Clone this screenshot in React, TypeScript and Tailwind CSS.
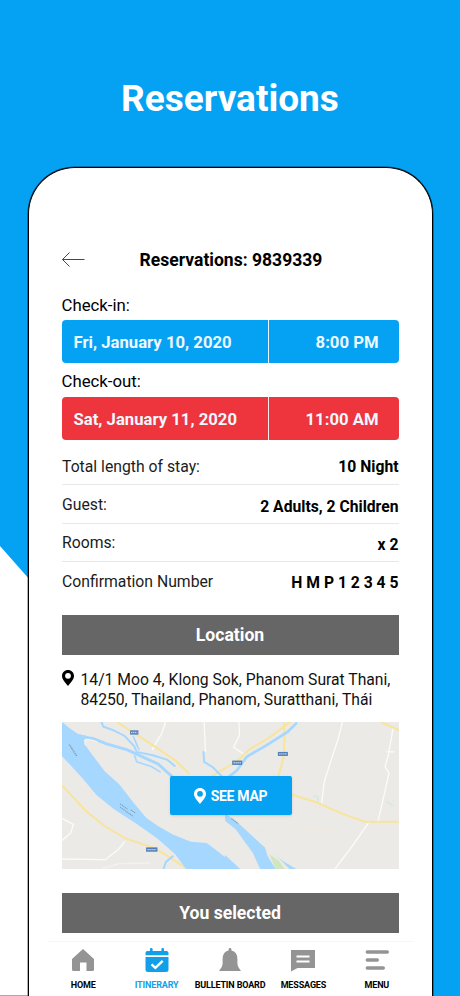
import React from 'react';

interface StayDate {
  label: string;
  date: string;
  time: string;
  barClass: string;
  labelClass: string;
}

interface Detail {
  label: string;
  value: string;
  rowClass: string;
  valueClass: string;
}

const dates: StayDate[] = [
  { label: 'Check-in:', date: 'Fri, January 10, 2020', time: '8:00 PM', barClass: 'bg-[#05a2f3]', labelClass: 'h-[30px] pt-0.5' },
  { label: 'Check-out:', date: 'Sat, January 11, 2020', time: '11:00 AM', barClass: 'bg-[#ee353d]', labelClass: 'h-[34px] pt-1' },
];

const details: Detail[] = [
  { label: 'Total length of stay:', value: '10 Night', rowClass: 'h-[45px] pt-[9px] border-b', valueClass: 'pt-px' },
  { label: 'Guest:', value: '2 Adults, 2 Children', rowClass: 'h-[39px] pt-px border-b', valueClass: 'pt-[4px]' },
  { label: 'Rooms:', value: 'x 2', rowClass: 'h-[38px] border-b', valueClass: 'pt-[4px]' },
  { label: 'Confirmation Number', value: 'H M P 1 2 3 4 5', rowClass: 'h-[53px] pb-[13px]', valueClass: 'pt-[2px]' },
];

function PinIcon({ className }: { className?: string }) {
  return (
    <svg viewBox="0 0 12 16" fill="currentColor" className={className}>
      <path
        fillRule="evenodd"
        d="M6 0C2.7 0 0 2.6 0 5.9 0 9.2 3.4 12.6 6 16c2.6-3.4 6-6.8 6-10.1C12 2.6 9.3 0 6 0Zm0 2.9a2.9 2.9 0 1 1 0 5.8 2.9 2.9 0 0 1 0-5.8Z"
      />
    </svg>
  );
}

function RiverMap() {
  return (
    <svg viewBox="0 0 1010 442" preserveAspectRatio="none" className="absolute inset-0 h-full w-full">
      <rect width="1010" height="442" fill="#ebeae7" />

      {/* Minor roads */}
      <g fill="none" stroke="#fbfbfa" strokeWidth="4">
        <path d="M310 0 300 32 282 62 270 84M0 290l34 18-8 26-26 22M0 412l130 2 36-28 22-26" />
        <path d="M426 0l4 90M530 0l2 40-18 36 40 26M840 0l-12 50-20 60-22 70-8 66M992 20l-14 80-10 34 12 20-18 80-16 70M918 304l-46 66-54 72M972 90h24" />
        <path d="M122 440l50-14 90-2" stroke="#f3f2ef" />
      </g>

      {/* Main roads */}
      <g fill="none" stroke="#f8e49c" strokeWidth="6">
        <path d="M164 0l50 32 56 36 70 48 42 40" />
        <path d="M0 190l70 76 56 46 64 38 90 30 90 58" />
        <path d="M440 168l34-20 48-28 40-38 58-34 66-50M665 0l2 50-4 62-16 56" />
        <path d="M688 218l76 24 72 32 72 26h102M956 0l54 24" />
        <path d="M504 322l120 8 182-4" stroke="#f3e9d3" strokeWidth="2" />
      </g>

      {/* River and its side channels */}
      <g fill="#a5d7ff">
        <path d="M0 0 22 18 48 36 72 42 67 66 90 98 128 148 172 188 214 242 252 288 286 312 332 338 386 360 434 364 478 398 530 442H372L338 396 286 350 220 304 158 264 104 220 62 170 0 102Z" />
        <path d="M489 276 524 300 576 348 602 372 662 418 702 442H594L572 394 520 322 489 298Z" />
        <path d="M489 400 534 442H480Z" />
      </g>
      <path d="M606 370 650 410 682 442H640L616 402Z" fill="#eceae3" />
      <path d="M622 398 650 418 668 442H640Z" fill="#cfe6bf" />
      <g fill="none" stroke="#a5d7ff" strokeLinecap="round">
        <path d="M52 42 94 50 134 66 196 84 248 108 288 126 330 164" strokeWidth="9" />
        <path d="M118 0l6 14 28 10 36 18 28 30 8 18 48 10 44 14 22 18" strokeWidth="6" />
        <path d="M218 102l6 18 44 14 26 16M214 44l16 38" strokeWidth="5" />
        <path d="M424 90l2 30 26 16 26 26" strokeWidth="6" />
        <path d="M498 166l26-20 30-42 56-32 66-42 26-26" strokeWidth="8" />
        <path d="M332 404l-20 16-8 22" strokeWidth="6" />
      </g>
      <path d="M70 70 68 55Q80 48 106 60" fill="none" stroke="#f8f7f3" strokeWidth="3" />

      {/* Road shields */}
      <g fill="#527fb9">
        <rect x="204" y="25" width="25" height="13" />
        <rect x="252" y="377" width="34" height="13" />
        <rect x="510" y="116" width="30" height="13" />
        <rect x="647" y="90" width="30" height="12" />
      </g>
      <g stroke="#c7d9ef" strokeWidth="4" strokeDasharray="4 2">
        <path d="M207 31.500h19M256 383.500h26M514 122.500h22M651 96h22" />
      </g>

      {/* River names */}
      <g fill="none" stroke="#8199ad" strokeWidth="4" strokeDasharray="4 2">
        <path d="M22 68 44 102" />
        <path d="M174 246 196 262M206 264l14 10M174 256l40 28" strokeWidth="3" />
        <path d="M508 290 528 306" strokeWidth="3" />
      </g>
      <path d="M754 220l12 6 2 14M972 238l20 14" fill="none" stroke="#d3ecd8" strokeWidth="5" />
    </svg>
  );
}

function HomeIcon() {
  return (
    <svg viewBox="0 0 22 22" fill="#949494" className="h-[22px] w-[22px]">
      <path d="M11 0 0 10v10.500Q0 22 1.500 22H8v-8.500h6.500V22h6q1.500 0 1.500-1.500V10Z" />
    </svg>
  );
}

function ItineraryIcon() {
  return (
    <svg viewBox="0 0 24 24" fill="#129fe9" className="h-6 w-6">
      <path d="M.5 7.300V5q0-2 2-2H5V1q0-1 1.300-1T7.600 1v2h8.800V1q0-1 1.300-1T19 1v2h2.500q2 0 2 2v2.300Z" />
      <path d="M.5 9h23v12.500q0 2.500-2.500 2.500H3Q.5 24 .5 21.500Z" />
      <path d="m6.500 16.300 3.900 3.500 7.300-6.900" fill="none" stroke="#fff" strokeWidth="2.400" />
    </svg>
  );
}

function BellIcon() {
  return (
    <svg viewBox="0 0 22 24" fill="#949494" className="h-6 w-[22px]">
      <path d="M11 0q1.400 0 1.400 1.400v1.200q6 1.500 6 8.400v4.500q0 3 3.600 7.500H0q3.600-4.500 3.600-7.500V11q0-6.900 6-8.400V1.400Q9.600 0 11 0Z" />
    </svg>
  );
}

function MessagesIcon() {
  return (
    <svg viewBox="0 0 24 22" fill="#949494" className="relative top-px h-[22px] w-6">
      <path d="M0 0h24v18H6.500L0 21.500Z" />
      <path d="M5.500 6.500h13M5.500 11.500h13" stroke="#fff" strokeWidth="2" />
    </svg>
  );
}

function MenuIcon() {
  return (
    <svg viewBox="0 0 24 20" fill="none" stroke="#949494" strokeWidth="3.400" strokeLinecap="round" className="h-5 w-6">
      <path d="M2.300 2h20M2.300 10h10M2.300 18h16" />
    </svg>
  );
}

const tabs = [
  { label: 'HOME', icon: HomeIcon, active: false },
  { label: 'ITINERARY', icon: ItineraryIcon, active: true },
  { label: 'BULLETIN BOARD', icon: BellIcon, active: false },
  { label: 'MESSAGES', icon: MessagesIcon, active: false },
  { label: 'MENU', icon: MenuIcon, active: false },
];

export default function App() {
  return (
    <div className="relative flex h-[996px] w-[460px] flex-col overflow-hidden bg-[#05a2f3] font-['Roboto',sans-serif] text-black">
      {/* Slanted white corner behind the phone */}
      <svg viewBox="0 0 60 450" className="absolute bottom-0 left-0 h-[450px] w-[60px]">
        <path d="M0 0 60 68V450H0Z" fill="#fff" />
        <path d="M0 449.500h60" stroke="#aaa" />
      </svg>

      <h1 className="h-[167px] pt-[77px] text-center text-[37px] leading-[44px] font-bold text-white">Reservations</h1>

      <main className="relative mx-auto flex w-[405px] flex-1 flex-col rounded-t-[47px] border-x border-t border-black bg-white shadow-[0_0_0_0.5px_rgba(0,0,0,0.6)]">
        <div className="flex flex-1 flex-col pr-[33px] pl-[33px]">
          <header className="mt-[80px] flex h-6 items-center">
            <svg viewBox="0 0 23 16" fill="none" stroke="#333" strokeWidth="0.900" className="h-4 w-[23px]">
              <path d="M22.500 7.500H.5M7.500 .5.5 7.500l7 7" />
            </svg>
            <h2 className="ml-[55px] text-[17.550px] font-bold">Reservations: 9839339</h2>
          </header>

          <section className="mt-[18px]">
            {dates.map((item) => (
              <div key={item.label}>
                <div className={`flex items-center text-[16.800px] ${item.labelClass}`}>{item.label}</div>
                <div className={`flex h-[43px] items-center rounded text-[16.700px] font-bold text-[#eef8ff] ${item.barClass}`}>
                  <span className="flex h-full w-[207px] items-center border-r border-white/90 pt-0.5 pl-3">{item.date}</span>
                  <span className="flex-1 pt-0.5 pr-5 text-right">{item.time}</span>
                </div>
              </div>
            ))}
          </section>

          <section>
            {details.map((item) => (
              <div key={item.label} className={`flex items-center justify-between border-[#e8e8e8] ${item.rowClass}`}>
                <span className="pl-[0.500px] text-[15.750px] text-[#1c1c1c]">{item.label}</span>
                <span className={`text-[15.700px] font-bold ${item.valueClass}`}>{item.value}</span>
              </div>
            ))}
          </section>

          <h3 className="flex h-10 items-center justify-center bg-[#666] text-[17.600px] font-bold text-white">Location</h3>
          <div className="flex h-[67px] pt-[15px]">
            <PinIcon className="h-4 w-3 shrink-0" />
            <p className="ml-[7px] text-[15.700px] leading-5 whitespace-nowrap text-[#111]">
              14/1 Moo 4, Klong Sok, Phanom Surat Thani,
              <br />
              84250, Thailand, Phanom, Suratthani, Thái
            </p>
          </div>

          <div className="relative flex h-[147px] items-center justify-center">
            <RiverMap />
            <button className="relative ml-px flex h-[39px] w-[122px] items-center justify-center gap-[5px] rounded-[2px] bg-[#05a2f3] text-[14px] font-bold tracking-[-0.3px] text-white shadow">
              <PinIcon className="h-4 w-3" />
              <span className="pt-px">SEE MAP</span>
            </button>
          </div>

          <h3 className="mt-6 flex h-10 items-center justify-center bg-[#666] text-[17.600px] font-bold text-white">You selected</h3>
        </div>

        <nav className="mx-[18px] flex h-[55px] border-t border-[#f7f7f7]">
          {tabs.map(({ label, icon: Icon, active }) => (
            <button key={label} className="flex w-[73.600px] flex-col items-center pt-[6px]">
              <span className="flex h-6 items-center">
                <Icon />
              </span>
              <span className={`mt-[7px] text-[9px] leading-3 font-bold tracking-[-0.15px] whitespace-nowrap ${active ? 'text-[#129fe9]' : 'text-black'}`}>
                {label}
              </span>
            </button>
          ))}
        </nav>
      </main>
    </div>
  );
}
